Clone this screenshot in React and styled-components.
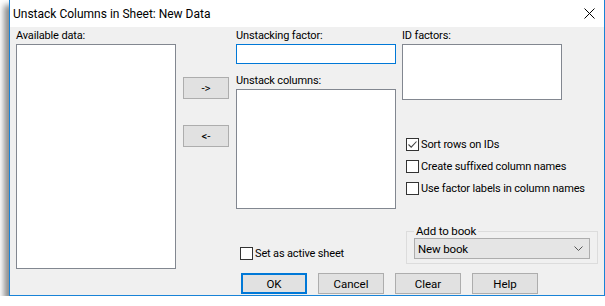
import React from "react";
import styled, { createGlobalStyle } from "styled-components";

const Global = createGlobalStyle`
  html, body {
    margin: 0;
    padding: 0;
    background: #ffffff;
    font-family: Roboto, "Liberation Sans", sans-serif;
    font-size: 11px;
    letter-spacing: -0.15px;
    color: #000;
  }
`;

const Win = styled.div`
  margin-left: 9px;
  width: 594px;
  height: 295px;
  border: 1px solid #1883d7;
  border-top: none;
  background: #f0f0f0;
  box-shadow: -5px 5px 6px rgba(0, 0, 0, 0.45);
  display: flex;
  flex-direction: column;
`;

const TitleBar = styled.div`
  height: 27px;
  background: #ffffff;
  display: flex;
  align-items: center;
  justify-content: space-between;
  padding: 0 9px 0 3px;
  font-size: 12px;
  letter-spacing: 0;
`;

const Body = styled.div`
  flex: 1;
  display: flex;
  flex-direction: column;
  padding: 2px 6px 0 6px;
`;

const Main = styled.div`
  display: flex;
  height: 240px;
`;

const Col = styled.div`
  display: flex;
  flex-direction: column;
  width: ${(p) => p.w || 160}px;
  margin-left: ${(p) => p.ml || 0}px;
  padding-top: ${(p) => p.pt || 0}px;
`;

const Label = styled.div`
  height: 14px;
  line-height: 13px;
  margin-bottom: 1px;
  margin-top: ${(p) => p.mt || 0}px;
`;

const ListBox = styled.div`
  height: ${(p) => p.h}px;
  width: 160px;
  box-sizing: border-box;
  background: #fff;
  border: 1px solid #828790;
`;

const Input = styled.div`
  height: 20px;
  width: 160px;
  box-sizing: border-box;
  background: #fff;
  border: 1px solid #0078d7;
`;

const Button = styled.button`
  width: ${(p) => p.w || 66}px;
  height: ${(p) => p.h || 22}px;
  box-sizing: border-box;
  background: #e1e1e1;
  border: ${(p) => (p.def ? "2px solid #0078d7" : "1px solid #adadad")};
  font-family: inherit;
  font-size: 11.5px;
  color: #000;
  padding: 0;
  margin: 0 0 ${(p) => p.mb || 0}px 0;
`;

const Checks = styled.div`
  display: flex;
  flex-direction: column;
  gap: 8px;
  margin-top: 37px;
  margin-left: 4px;
`;

const CheckRow = styled.label`
  display: flex;
  align-items: center;
  gap: 2px;
  height: 14px;
  margin-top: ${(p) => p.mt || 0}px;
  margin-left: ${(p) => p.ml || 0}px;
  white-space: nowrap;
`;

const Box = styled.span`
  width: 13px;
  height: 13px;
  box-sizing: border-box;
  border: 1px solid #333;
  background: #fff;
  display: flex;
  align-items: center;
  justify-content: center;
`;

const Group = styled.fieldset`
  margin: auto 0 5px 4px;
  padding: 0 7px 4px 7px;
  width: 192px;
  box-sizing: border-box;
  border: 1px solid #dcdcdc;
`;

const Legend = styled.legend`
  padding: 0 2px;
  margin-left: 0;
  font-size: 11.5px;
  line-height: 14px;
`;

const Select = styled.div`
  height: 21px;
  box-sizing: border-box;
  background: #e5e5e5;
  border: 1px solid #adadad;
  display: flex;
  align-items: center;
  justify-content: space-between;
  padding: 0 6px 0 3px;
  font-size: 11.5px;
`;

const Footer = styled.div`
  display: flex;
  gap: 11px;
  margin-top: 4px;
  padding-left: 225px;
`;

const Check = ({ checked, children, ...rest }) => (
  <CheckRow {...rest}>
    <Box>
      {checked && (
        <svg width="11" height="11" viewBox="0 0 11 11">
          <path d="M1.5 5.5 L4.2 8.2 L9.5 2.5" fill="none" stroke="#444" strokeWidth="1.1" />
        </svg>
      )}
    </Box>
    {children}
  </CheckRow>
);

const App = () => (
  <>
    <Global />
    <Win>
      <TitleBar>
        <span>Unstack Columns in Sheet: New Data</span>
        <svg width="11" height="11" viewBox="0 0 11 11">
          <path d="M0.5 0.5 L10.5 10.5 M10.5 0.5 L0.5 10.5" stroke="#000" strokeWidth="1" />
        </svg>
      </TitleBar>
      <Body>
        <Main>
          <Col>
            <Label>Available data:</Label>
            <ListBox h={225} />
          </Col>
          <Col w={46} ml={7} pt={48}>
            <Button w={46} mb={26}>-&gt;</Button>
            <Button w={46}>&lt;-</Button>
          </Col>
          <Col ml={7}>
            <Label>Unstacking factor:</Label>
            <Input />
            <Label mt={10}>Unstack columns:</Label>
            <ListBox h={120} />
            <Check mt={37} ml={4}>Set as active sheet</Check>
          </Col>
          <Col w={196} ml={6}>
            <Label>ID factors:</Label>
            <ListBox h={56} />
            <Checks>
              <Check checked>Sort rows on IDs</Check>
              <Check>Create suffixed column names</Check>
              <Check>Use factor labels in column names</Check>
            </Checks>
            <Group>
              <Legend>Add to book</Legend>
              <Select>
                <span>New book</span>
                <svg width="9" height="6" viewBox="0 0 9 6">
                  <path d="M0.5 0.5 L4.5 4.5 L8.5 0.5" fill="none" stroke="#555" strokeWidth="1" />
                </svg>
              </Select>
            </Group>
          </Col>
        </Main>
        <Footer>
          <Button def h={21}>OK</Button>
          <Button h={21}>Cancel</Button>
          <Button h={21}>Clear</Button>
          <Button h={21}>Help</Button>
        </Footer>
      </Body>
    </Win>
  </>
);

export default App;
